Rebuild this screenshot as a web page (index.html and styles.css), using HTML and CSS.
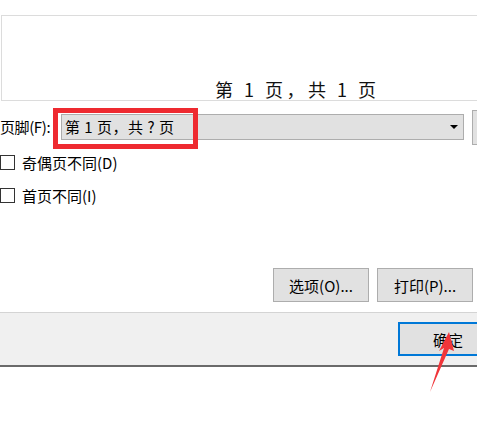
FILE: index.html
```html
<!DOCTYPE html>
<html lang="zh-CN">
<head>
    <meta charset="UTF-8">
    <title>页眉和页脚</title>
    <link rel="stylesheet" href="styles.css">
</head>
<body>
<div class="dlg">
    <!-- 预览 -->
    <div class="preview">
        <span class="preview-text">第 1 页，共 1 页</span>
    </div>
    <!-- 页脚选择 -->
    <div class="foot-row">
        <label class="foot-label">页脚(F):</label>
        <div class="select">
            <span class="select-text">第 1 页，共 ? 页</span>
            <span class="select-arrow"></span>
            <span class="mark"></span>
        </div>
        <div class="side-btn"></div>
    </div>
    <div class="check-row">
        <span class="box"></span>
        <span>奇偶页不同(D)</span>
    </div>
    <div class="check-row second">
        <span class="box"></span>
        <span>首页不同(I)</span>
    </div>
    <div class="btn-row">
        <button class="btn">选项(O)...</button>
        <button class="btn">打印(P)...</button>
    </div>
    <!-- 底部按钮栏 -->
    <div class="band">
        <button class="btn ok">确定</button>
    </div>
    <svg class="arrow" width="40" height="70" viewBox="0 0 40 70">
        <polygon points="22,2 27,21 22,19 3,62 17,18 12,21" fill="#f0353a"/>
    </svg>
</div>
</body>
</html>
```

FILE: styles.css
```css
*{
    margin: 0;
    padding: 0;
    box-sizing: border-box;
}
body{
    width: 477px;
    height: 424px;
    overflow: hidden;
    background: #fff;
    font-family: "Noto Sans CJK SC", "Liberation Sans", sans-serif;
    font-size: 15px;
    color: #000;
}
.dlg{
    position: relative;
    height: 424px;
    padding-top: 15px;
}
.preview{
    margin-left: 1px;
    width: 490px;
    height: 86px;
    border: 1px solid #dcdcdc;
    display: flex;
    align-items: flex-end;
    padding-left: 213px;
}
.preview-text{
    font-family: "Noto Sans CJK SC", serif;
    font-size: 18px;
    line-height: 22px;
    letter-spacing: 3.5px;
    color: #111;
}
.foot-row{
    display: flex;
    align-items: center;
    margin-top: 11px;
    height: 30px;
}
.foot-label{
    flex-shrink: 0;
    width: 61px;
    line-height: 20px;
    letter-spacing: -0.4px;
}
.select{
    position: relative;
    flex-shrink: 0;
    width: 403px;
    height: 26px;
    background: #e1e1e1;
    border: 1px solid #adadad;
    display: flex;
    align-items: center;
    padding-left: 3px;
}
.select-text{
    flex: 1;
    line-height: 20px;
    letter-spacing: 0.5px;
}
.select-arrow{
    width: 0;
    height: 0;
    border-left: 4px solid transparent;
    border-right: 4px solid transparent;
    border-top: 4px solid #000;
    margin-right: 5px;
}
/* 红色标注框 */
.mark{
    position: absolute;
    left: -9px;
    top: -7px;
    width: 145px;
    height: 41px;
    border: 5px solid #ee2a30;
}
.side-btn{
    flex-shrink: 0;
    margin-left: 8px;
    width: 20px;
    height: 35px;
    background: #e1e1e1;
    border: 1px solid #adadad;
}
.check-row{
    display: flex;
    align-items: center;
    height: 20px;
    margin-top: 10px;
}
.check-row.second{
    margin-top: 13px;
}
.box{
    width: 15px;
    height: 15px;
    border: 1px solid #333;
    background: #fff;
    margin-right: 7px;
}
.btn-row{
    display: flex;
    justify-content: flex-end;
    gap: 8px;
    margin-top: 63px;
    padding-right: 4px;
}
.btn{
    width: 96px;
    height: 34px;
    background: #e1e1e1;
    border: 1px solid #adadad;
    font-family: "Noto Sans CJK SC", "Liberation Sans", sans-serif;
    font-size: 15px;
    color: #000;
}
.band{
    margin-top: 10px;
    height: 55px;
    background: #f0f0f0;
    border-top: 1px solid #d4d4d4;
    border-bottom: 2px solid #6a6a6a;
    padding: 9px 0 0 398px;
}
.ok{
    width: 100px;
    border: 2px solid #0078d7;
}
.arrow{
    position: absolute;
    left: 427px;
    top: 330px;
}
```
